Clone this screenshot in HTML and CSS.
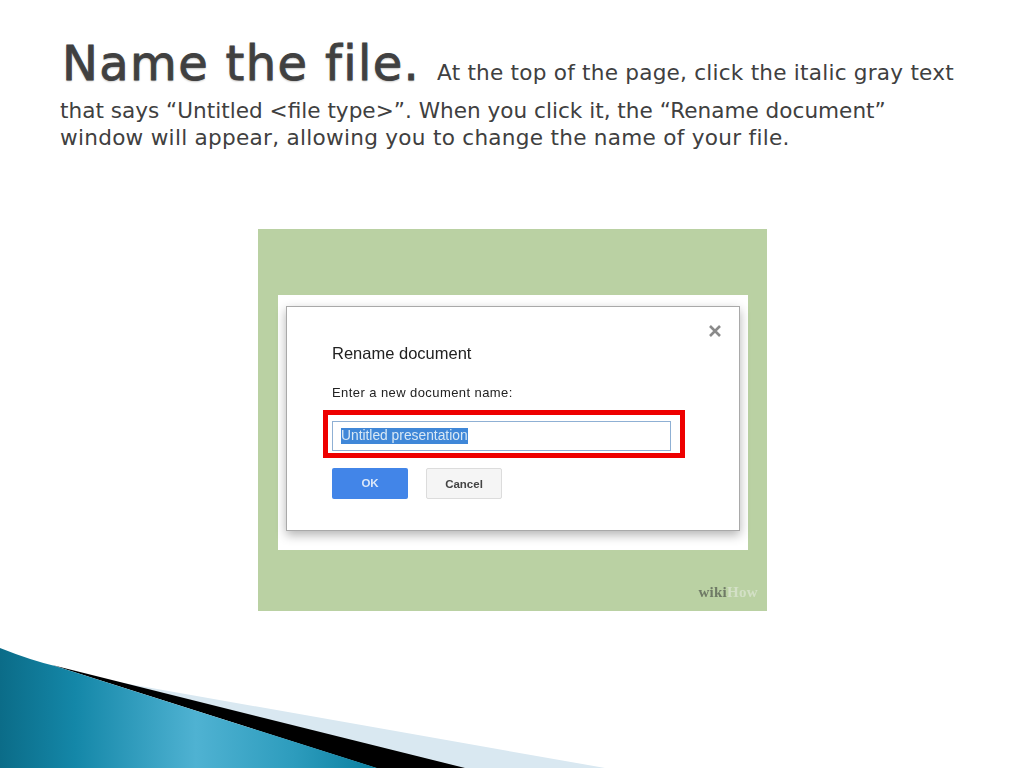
FILE: index.html
```html
<!DOCTYPE html>
<html lang="en">
<head>
    <meta charset="UTF-8">
    <meta name="viewport" content="width=device-width, initial-scale=1.0">
    <title>Name the file</title>
    <link rel="stylesheet" href="styles.css">
</head>
<body>
    <div class="slide">
        <div class="heading">
            <p class="line first"><span class="big">Name the file.</span> <span class="rest">At the top of the page, click the italic gray text</span></p>
            <p class="line">that says “Untitled &lt;file type&gt;”. When you click it, the “Rename document”</p>
            <p class="line last">window will appear, allowing you to change the name of your file.</p>
        </div>

        <div class="picture">
            <div class="sheet">
                <div class="dialog">
                    <svg class="close" width="14" height="14" viewBox="0 0 14 14">
                        <path d="M2 2 L12 12 M12 2 L2 12" stroke="#8a8a8a" stroke-width="2.6" fill="none"/>
                    </svg>
                    <h2>Rename document</h2>
                    <p class="prompt">Enter a new document name:</p>
                    <div class="name-box">
                        <span class="selected">Untitled presentation</span>
                        <div class="red-box"></div>
                    </div>
                    <div class="buttons">
                        <div class="btn ok">OK</div>
                        <div class="btn cancel">Cancel</div>
                    </div>
                </div>
            </div>
            <div class="wiki"><b>wiki</b><span>How</span></div>
        </div>

        <!-- corner decoration -->
        <svg class="corner" width="620" height="130" viewBox="0 0 620 130">
            <defs>
                <linearGradient id="teal" x1="0" y1="0" x2="1" y2="0">
                    <stop offset="0" stop-color="#0b6c88"/>
                    <stop offset="0.2" stop-color="#1487a8"/>
                    <stop offset="0.52" stop-color="#4fb2d2"/>
                    <stop offset="0.78" stop-color="#2d9cbd"/>
                    <stop offset="1" stop-color="#0a7f9f"/>
                </linearGradient>
            </defs>
            <path d="M95 30 L605 120 L605 130 L450 130 L60 20 Z" fill="#d9e8f1"/>
            <path d="M52 17 L465 120 L465 120 L376 120 Z" fill="#000"/>
            <path d="M0 0 Q30 12 55 18 L377 120 L0 120 Z" fill="url(#teal)"/>
        </svg>
    </div>
</body>
</html>
```

FILE: styles.css
```css
html, body {
    margin: 0;
    background: #fff;
}
.slide {
    position: relative;
    width: 1024px;
    height: 768px;
    overflow: hidden;
    font-family: "DejaVu Sans", sans-serif;
    color: #404040;
}
.heading {
    padding: 40px 0 0 60px;
    height: 229px;
    box-sizing: border-box;
}
.line {
    margin: 0;
    font-size: 21.6px;
    line-height: 27px;
    white-space: nowrap;
}
.first {
    height: 57px;
    line-height: 46px;
}
.last {
    letter-spacing: 0.27px;
}
.big {
    font-size: 48px;
    font-weight: normal;
    letter-spacing: 1.35px;
    margin-left: 2px;
    -webkit-text-stroke: 0.8px #404040;
    text-shadow: 0 1px 2px #aaa;
}
.rest {
    margin-left: 10px;
    letter-spacing: 0.22px;
}
.picture {
    position: relative;
    width: 509px;
    height: 382px;
    margin-left: 258px;
    padding: 66px 19px 0 20px;
    box-sizing: border-box;
    background: #bad1a3;
    filter: blur(0.35px);
}
.sheet {
    width: 470px;
    height: 255px;
    padding: 11px 8px 0;
    box-sizing: border-box;
    background: #fff;
}
.dialog {
    position: relative;
    width: 454px;
    height: 225px;
    padding: 36px 0 0 45px;
    box-sizing: border-box;
    background: #fff;
    border: 1px solid #a9a9a9;
    box-shadow: 0 4px 10px rgba(0, 0, 0, 0.3);
    font-family: "Liberation Sans", sans-serif;
    color: #222;
}
.close {
    position: absolute;
    top: 17px;
    right: 17px;
}
.dialog h2 {
    margin: 0;
    font-size: 16.5px;
    font-weight: normal;
    line-height: 20px;
}
.prompt {
    margin: 22px 0 0;
    font-size: 13px;
    letter-spacing: 0.42px;
    line-height: 15px;
}
.name-box {
    position: relative;
    width: 339px;
    height: 30px;
    margin-top: 21px;
    padding: 6px 8px;
    box-sizing: border-box;
    border: 1px solid #8fb0d4;
}
.selected {
    display: block;
    width: fit-content;
    background: #3f87d8;
    color: #d8e8f5;
    font-size: 13.8px;
    line-height: 16px;
}
.red-box {
    position: absolute;
    top: -12px;
    left: -10px;
    width: 362px;
    height: 48px;
    box-sizing: border-box;
    border: 5px solid #ee0000;
}
.buttons {
    display: flex;
    gap: 18px;
    margin-top: 17px;
}
.btn {
    width: 76px;
    height: 31px;
    box-sizing: border-box;
    border-radius: 2px;
    font-size: 11.5px;
    font-weight: bold;
    line-height: 30px;
    text-align: center;
}
.ok {
    background: #4285e8;
    color: #dce8f8;
}
.cancel {
    background: #f5f5f5;
    border: 1px solid #dcdcdc;
    color: #444;
}
.wiki {
    position: absolute;
    right: 9px;
    bottom: 10px;
    font-family: "Liberation Serif", serif;
    font-size: 15px;
    font-weight: bold;
    letter-spacing: 0.3px;
}
.wiki b {
    color: #6f7a66;
}
.wiki span {
    color: #d3e0c6;
}
.corner {
    position: absolute;
    left: 0;
    top: 648px;
}
```
